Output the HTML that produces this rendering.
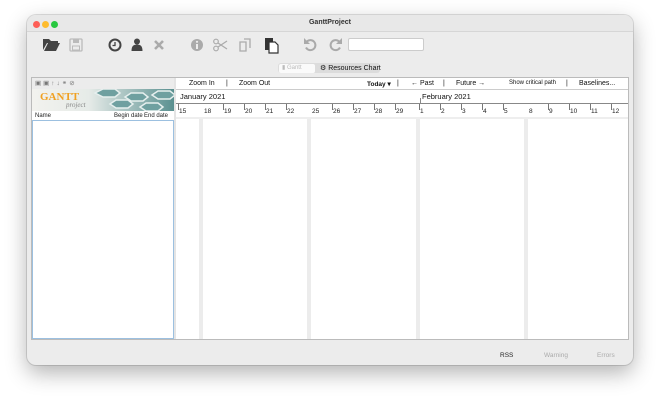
<!DOCTYPE html><html><head><style>
*{margin:0;padding:0;box-sizing:border-box}
body{width:660px;height:400px;background:#fff;font-family:"Liberation Sans",sans-serif;position:relative;overflow:hidden}
.a{position:absolute}
.win{left:27px;top:15px;width:606px;height:350px;background:#ececec;border-radius:9px;box-shadow:0 8px 22px rgba(0,0,0,.3),0 0 0 1px rgba(0,0,0,.12);overflow:hidden}
.t{font-size:7px;color:#111;white-space:nowrap}
.d{font-size:6.5px;color:#222;white-space:nowrap}
.tick{width:1px;background:#777}
</style></head><body>
<div class="a win">
 <div class="a" style="left:0;top:0;width:606px;height:17px;background:#e8e8e8;border-bottom:1px solid #d6d6d6"></div>
 <div class="a" style="left:6px;top:6px;width:7px;height:7px;border-radius:50%;background:#fe5f57"></div>
 <div class="a" style="left:15px;top:6px;width:7px;height:7px;border-radius:50%;background:#febc2e"></div>
 <div class="a" style="left:24px;top:6px;width:7px;height:7px;border-radius:50%;background:#28c840"></div>
 <div class="a t" style="left:0;width:606px;top:4px;text-align:center;font-weight:bold;color:#333">GanttProject</div>
</div>
<svg class="a" style="left:0;top:0" width="660" height="400">
 <path d="M43 39h6l2 2h7v2h-11l-4 7z M44 51l4-8h12l-4 8z" fill="#444"/>
 <rect x="70" y="39" width="12" height="12" rx="1" fill="none" stroke="#bbb" stroke-width="1.3"/><rect x="73" y="39.5" width="6" height="3.5" fill="#bbb"/><rect x="72.5" y="46" width="7" height="4" fill="none" stroke="#bbb"/>
 <circle cx="115" cy="45" r="5.5" fill="none" stroke="#444" stroke-width="2"/><path d="M115 42v3.5h-2.5" stroke="#444" stroke-width="1.3" fill="none"/>
 <circle cx="137" cy="41.5" r="3" fill="#444"/><path d="M131.5 51c0-5 2-6.5 5.5-6.5s5.5 1.5 5.5 6.5z" fill="#444"/>
 <path d="M155 41l8 8M163 41l-8 8" stroke="#aaa" stroke-width="2.6"/>
 <circle cx="197" cy="45" r="6" fill="#aaa"/><rect x="196" y="44" width="2" height="5" fill="#ececec"/><circle cx="197" cy="41.8" r="1.1" fill="#ececec"/>
 <circle cx="216" cy="41.5" r="2.3" fill="none" stroke="#aaa" stroke-width="1.2"/><circle cx="216" cy="48.5" r="2.3" fill="none" stroke="#aaa" stroke-width="1.2"/><path d="M218 43l9 6M218 47l9-6" stroke="#aaa" stroke-width="1.2"/>
 <path d="M240 42h6v9h-6z M244 39h6v9" fill="none" stroke="#aaa" stroke-width="1.3"/>
 <rect x="265" y="38" width="8" height="12" fill="#333"/><path d="M269 42h6l3 3v8h-9z" fill="#fff" stroke="#333" stroke-width="1.2"/>
 <path d="M307 41.5a5 5 0 1 1 -1 6" fill="none" stroke="#aaa" stroke-width="2"/><path d="M304 38v6h6z" fill="#aaa"/>
 <path d="M339 41.5a5 5 0 1 0 1 6" fill="none" stroke="#aaa" stroke-width="2"/><path d="M342 38v6h-6z" fill="#aaa"/>
</svg>
<div class="a" style="left:348px;top:38px;width:76px;height:13px;background:#fff;border:1px solid #ccc;border-radius:2px"></div>
<div class="a" style="left:278px;top:63px;width:102px;height:10px;background:#dcdcdc;border-radius:3px"></div>
<div class="a t" style="left:279px;top:63.5px;width:36px;height:9px;background:#fafafa;border-radius:2px;color:#bbb;font-size:6px;padding-left:3px;line-height:9px">▮ Gantt</div>
<div class="a t" style="left:320px;top:64px;font-size:7px">⚙ Resources Chart</div>
<div class="a" style="left:31px;top:77px;width:598px;height:263px;background:#fff;border:1px solid #bbb"></div>
<div class="a" style="left:32px;top:78px;width:142px;height:11px;background:#ececec"></div>
<div class="a t" style="left:35px;top:79px;color:#777;font-size:6.5px;letter-spacing:2px">▣▣↑↓⚭⊘</div>
<div class="a" style="left:32px;top:89px;width:142px;height:22px;background:linear-gradient(90deg,#f2f2ee 0,#e6ebe8 40%,#5a9090 100%)"></div>
<svg class="a" style="left:90px;top:89px" width="84" height="22"><g fill="#6fa0a0" stroke="#e6efee" stroke-width="1.5"><path d="M5 4l8-4h12l5 4l-5 4h-12z"/><path d="M35 8l6-4h12l5 4l-5 4h-12z"/><path d="M20 15l6-4h12l5 4l-5 4h-12z"/><path d="M50 18l6-4h12l5 4l-5 4h-12z"/><path d="M62 6l6-4h12l5 4l-5 4h-12z"/></g></svg>
<div class="a" style="left:40px;top:91px;font-size:11px;font-weight:bold;color:#f0a020;font-family:'Liberation Serif',serif">GANTT</div>
<div class="a" style="left:66px;top:101px;font-size:7px;font-style:italic;color:#888;font-family:'Liberation Serif',serif">project</div>
<div class="a d" style="left:35px;top:113px;font-size:6px">Name</div>
<div class="a d" style="left:114px;top:113px;font-size:6px">Begin date</div>
<div class="a d" style="left:144px;top:113px;font-size:6px">End date</div>
<div class="a" style="left:32px;top:120px;width:142px;height:219px;border:1px solid #9cc0e0"></div>
<div class="a" style="left:174px;top:78px;width:2px;height:261px;background:#e4e4e4"></div>
<div class="a t" style="left:189px;top:80px">Zoom In</div>
<div class="a t" style="left:226px;top:80px">|</div>
<div class="a t" style="left:239px;top:80px">Zoom Out</div>
<div class="a t" style="left:367px;top:80px;font-size:6.5px"><b>Today ▾</b></div>
<div class="a t" style="left:397px;top:80px">|</div>
<div class="a t" style="left:411px;top:80px">← Past</div>
<div class="a t" style="left:443px;top:80px">|</div>
<div class="a t" style="left:456px;top:80px">Future →</div>
<div class="a t" style="left:509px;top:80px;font-size:6px">Show critical path</div>
<div class="a t" style="left:566px;top:80px">|</div>
<div class="a t" style="left:579px;top:80px">Baselines...</div>
<div class="a" style="left:176px;top:89px;width:452px;height:1px;background:#ccc"></div>
<div class="a t" style="left:180px;top:92px;font-size:7.5px">January 2021</div>
<div class="a t" style="left:422px;top:92px;font-size:7.5px">February 2021</div>
<div class="a" style="left:176px;top:103px;width:452px;height:1px;background:#888"></div>
<div class="a" style="left:420px;top:98px;width:1px;height:6px;background:#888"></div>
<div class="a" style="left:176px;top:117px;width:452px;height:2px;background:#eee"></div>
<div class="a" style="left:199px;top:119px;width:4px;height:220px;background:#ececec"></div>
<div class="a" style="left:307px;top:119px;width:4px;height:220px;background:#ececec"></div>
<div class="a" style="left:416px;top:119px;width:4px;height:220px;background:#ececec"></div>
<div class="a" style="left:524px;top:119px;width:4px;height:220px;background:#ececec"></div>
<div id="days"></div>
<div class="a d" style="left:500px;top:352px;color:#222">RSS</div>
<div class="a d" style="left:544px;top:352px;color:#aaa">Warning</div>
<div class="a d" style="left:597px;top:352px;color:#aaa">Errors</div>
<script>
var d=[[15,179],[18,204],[19,224],[20,245],[21,266],[22,287],[25,312],[26,333],[27,354],[28,375],[29,396],[1,420],[2,441],[3,462],[4,483],[5,504],[8,529],[9,549],[10,570],[11,591],[12,612]],h='';
d.forEach(function(p){h+='<div class="a tick" style="left:'+(p[1]-1)+'px;top:104px;height:'+(p[0]==18||p[0]==25||p[0]==8?0:6)+'px"></div><div class="a d" style="left:'+p[1]+'px;top:108px">'+p[0]+'</div>';});
document.getElementById('days').innerHTML=h;
</script>
</body></html>
